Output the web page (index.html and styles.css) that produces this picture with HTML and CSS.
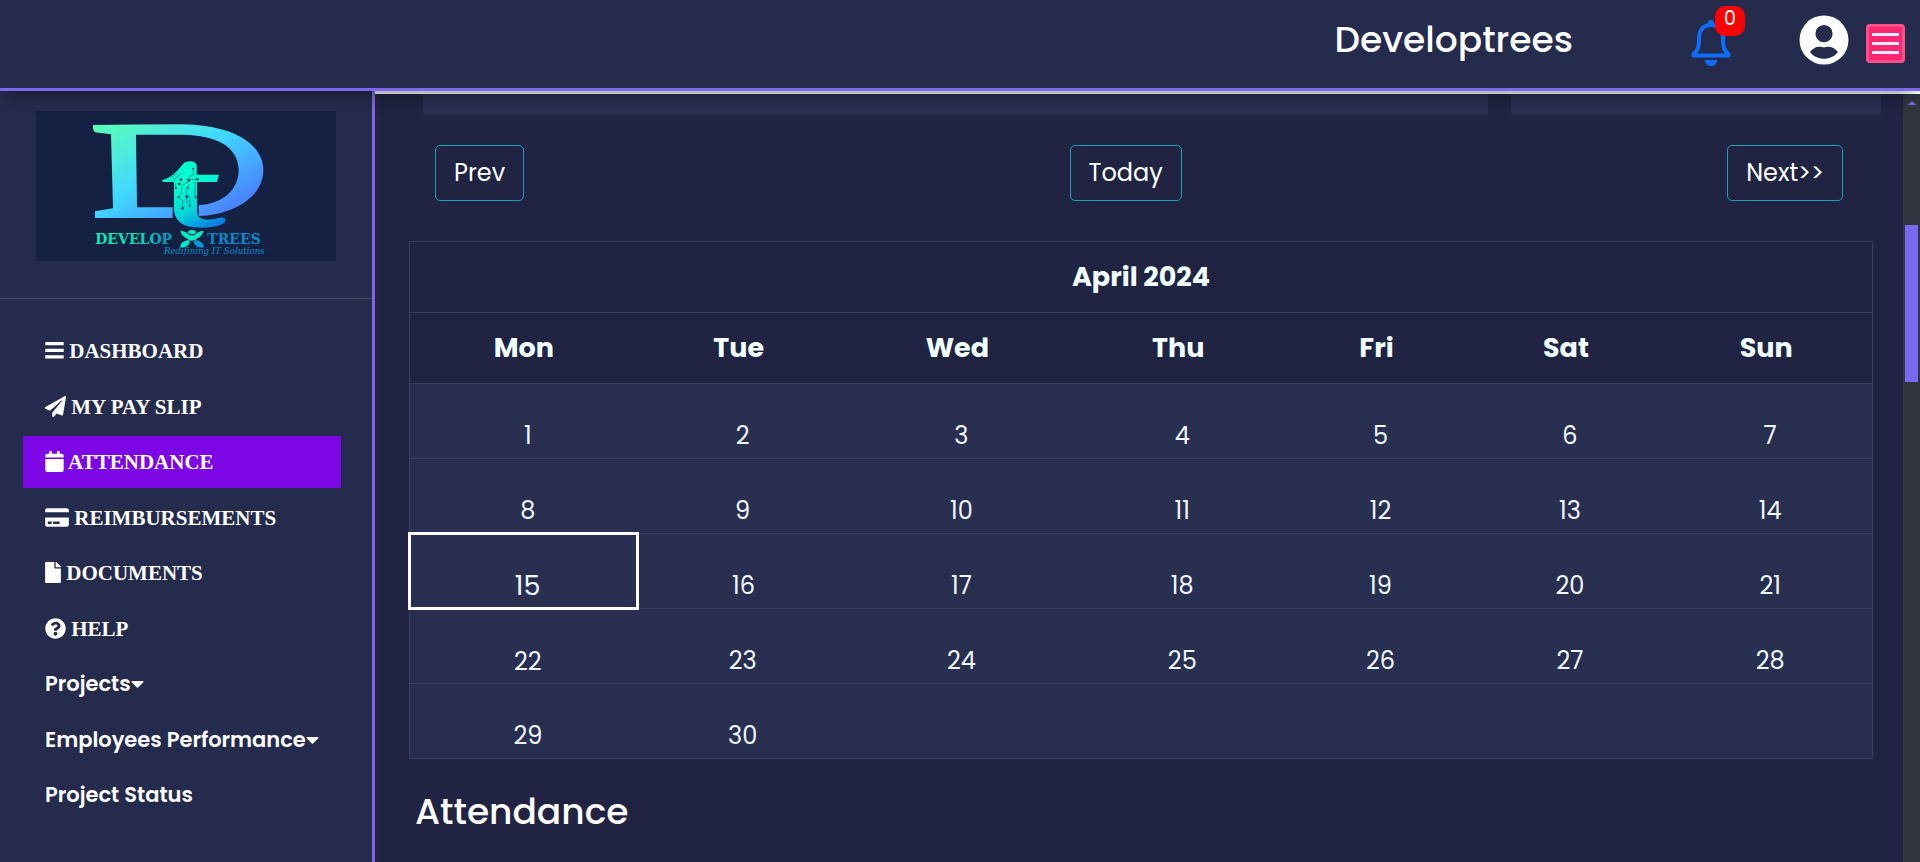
FILE: index.html
```html
<!DOCTYPE html>
<html lang="en">
<head>
<meta charset="utf-8">
<title>Developtrees - Attendance</title>
<link rel="stylesheet" href="styles.css">
</head>
<body>
<div class="app">
  <header class="topbar">
    <h1 class="brand">Developtrees</h1>
    <a class="bell" href="#" aria-label="Notifications">
      <svg width="40" height="48" viewBox="0 0 40 48" aria-hidden="true">
        <path d="M20 7C11 7 8 13.500 8 21C8 30 6.500 33 2.500 36V37.500H37.500V36C33.500 33 32 30 32 21C32 13.500 29 7 20 7Z" fill="none" stroke="#0d6efd" stroke-width="4" stroke-linejoin="round"/>
        <path d="M17 7V5a3 3 0 0 1 6 0v2z" fill="#0d6efd"/>
        <path d="M14 42h12c0 4-3 6-6 6s-6-2-6-6z" fill="#0d6efd"/>
      </svg>
      <span class="badge">0</span>
    </a>
    <a class="account" href="#" aria-label="Account">
      <svg width="50" height="50" viewBox="0 0 50 50" aria-hidden="true">
        <path fill="#fff" fill-rule="evenodd" d="M25 .5a24.500 24.500 0 1 0 0 49a24.500 24.500 0 1 0 0-49zM25 10a8.600 8.600 0 1 1 0 17.200a8.600 8.600 0 1 1 0-17.200zM11 37C14.500 32 19.500 31.200 22 31.800Q25 32.800 28 31.800C31 31.200 36 32.500 39 37C35.500 41.500 30.500 43.800 25 43.800S14.500 41.500 11 37z"/>
      </svg>
    </a>
    <button class="menu-toggle" type="button" aria-label="Menu"><span></span><span></span><span></span></button>
  </header>
  <div class="body">
    <aside class="sidebar">
      <div class="logo">
        <svg viewBox="108 93 900 450" role="img" aria-label="Develop Trees logo">
          <defs>
            <linearGradient id="gd" gradientUnits="userSpaceOnUse" x1="340" y1="110" x2="560" y2="480">
              <stop offset="0" stop-color="#5affb8"/><stop offset=".5" stop-color="#41d8ff"/><stop offset="1" stop-color="#4a7dff"/>
            </linearGradient>
            <linearGradient id="gt" gradientUnits="userSpaceOnUse" x1="560" y1="310" x2="630" y2="450">
              <stop offset="0" stop-color="#00ffd0"/><stop offset=".5" stop-color="#00d5d8"/><stop offset="1" stop-color="#0878e8"/>
            </linearGradient>
            <linearGradient id="gw" gradientUnits="userSpaceOnUse" x1="262" y1="0" x2="793" y2="0">
              <stop offset="0" stop-color="#00f5b8"/><stop offset=".3" stop-color="#00dcb8"/><stop offset=".5" stop-color="#0a86c0"/><stop offset="1" stop-color="#0a8ad0"/>
            </linearGradient>
          </defs>
          <rect x="108" y="93" width="900" height="450" fill="#152142"/>
          <path fill="url(#gd)" d="M279 135Q400 133 545 133C700 135 791 192 790 272C789 350 700 405 596 408V376C680 370 717 320 716 268C714 200 650 166 548 164H408L411 382H518V414H285V394L339 385L333 163L285 157Q279 152 279 145Z"/>
          <path fill="url(#gt)" d="M485 301C525 288 536 266 550 251C562 240 590 241 590 258V284H657L651 306H591V398C597 424 630 421 660 413C680 411 682 424 668 432C640 445 590 446 560 438C530 428 522 405 522 385V306H490Z"/>
          <g fill="none" stroke="#0a6f78" stroke-width="2">
            <path d="M580 266V284L566 292V304L545 318V342L535 352M590 298H556M585 352V305M527 324V310M560 349V368M569 376V352L558 340V325L570 312M548 384V362L537 352M510 295L530 280M520 300L545 280"/>
          </g>
          <g fill="#12405c"><circle cx="580" cy="266" r="3"/><circle cx="592" cy="298" r="4"/><circle cx="566" cy="302" r="4"/><circle cx="543" cy="299" r="4"/><circle cx="564" cy="325" r="3"/><circle cx="528" cy="325" r="3"/><circle cx="535" cy="352" r="3"/><circle cx="560" cy="350" r="4"/><circle cx="587" cy="352" r="3"/><circle cx="548" cy="385" r="4"/><circle cx="569" cy="377" r="3"/><circle cx="538" cy="312" r="4"/></g>
          <g fill="#00e8c4">
            <ellipse cx="576" cy="456" rx="12" ry="6"/>
            <path d="M541 452Q560 454 570 466H582Q592 454 611 452Q608 468 592 475L586 480Q575 484 566 480L560 475Q544 468 541 452Z"/>
            <path d="M566 480Q542 482 540 502Q562 506 570 486Z"/>
            <path fill="#0a9ad8" d="M586 480Q610 482 612 502Q590 506 580 486Z"/>
          </g>
          <text class="wordmark" x="401" y="493" text-anchor="middle" fill="url(#gw)">DEVELOP</text>
          <text class="wordmark" x="702" y="493" text-anchor="middle" fill="url(#gw)">TREES</text>
          <text class="tagline" x="643" y="523" text-anchor="middle" fill="url(#gw)">Redifining IT Solutions</text>
        </svg>
      </div>
      <nav class="nav" aria-label="Main">
        <ul>
          <li><a class="caps" href="#"><svg class="i14" viewBox="0 0 448 512" aria-hidden="true"><path d="M0 50h448v80H0zM0 212h448v80H0zM0 374h448v80H0z"/></svg> DASHBOARD</a></li>
          <li><a class="caps" href="#"><svg class="i16" viewBox="0 0 512 512" aria-hidden="true"><path d="M476 3.2L12.500 270.600c-18.100 10.400-15.800 35.600 2.200 43.200L121 358.400l287.300-253.200c5.500-4.900 13.300 2.600 8.600 8.300L176 407v80.500c0 23.600 28.500 32.900 42.500 15.800L282 426l124.600 52.200c14.200 6 30.400-2.900 33-18.200l72-432C515 7.800 493.300-6.800 476 3.200z"/></svg> MY PAY SLIP</a></li>
          <li><a class="caps active" href="#" aria-current="page"><svg class="i14" viewBox="0 0 448 512" aria-hidden="true"><path d="M12 192h424c6.600 0 12 5.400 12 12v260c0 26.500-21.500 48-48 48H48c-26.500 0-48-21.500-48-48V204c0-6.600 5.400-12 12-12zm436-44v-36c0-26.500-21.500-48-48-48h-48V12c0-6.600-5.400-12-12-12h-40c-6.600 0-12 5.400-12 12v52H160V12c0-6.600-5.400-12-12-12h-40c-6.600 0-12 5.400-12 12v52H48C21.500 64 0 85.500 0 112v36c0 6.600 5.400 12 12 12h424c6.600 0 12-5.400 12-12z"/></svg> ATTENDANCE</a></li>
          <li><a class="caps" href="#"><svg class="i18" viewBox="0 0 576 512" aria-hidden="true"><path d="M0 432c0 26.500 21.500 48 48 48h480c26.500 0 48-21.500 48-48V256H0v176zm192-68c0-6.600 5.400-12 12-12h136c6.600 0 12 5.400 12 12v40c0 6.600-5.400 12-12 12H204c-6.600 0-12-5.400-12-12v-40zm-128 0c0-6.600 5.400-12 12-12h72c6.600 0 12 5.400 12 12v40c0 6.600-5.400 12-12 12H76c-6.600 0-12-5.400-12-12v-40zM576 80v48H0V80c0-26.500 21.500-48 48-48h480c26.500 0 48 21.500 48 48z"/></svg> REIMBURSEMENTS</a></li>
          <li><a class="caps" href="#"><svg class="i12" viewBox="0 0 384 512" aria-hidden="true"><path d="M224 136V0H24C10.700 0 0 10.700 0 24v464c0 13.300 10.700 24 24 24h336c13.300 0 24-10.700 24-24V160H248c-13.200 0-24-10.800-24-24zm160-14.100v6.100H256V0h6.100c6.400 0 12.500 2.500 17 7l97.900 98c4.500 4.500 7 10.600 7 16.900z"/></svg> DOCUMENTS</a></li>
          <li><a class="caps" href="#"><svg class="i16" viewBox="0 0 512 512" aria-hidden="true"><path d="M504 256c0 136.997-111.043 248-248 248S8 392.997 8 256C8 119.083 119.043 8 256 8s248 111.083 248 248zM262.655 90c-54.497 0-89.255 22.957-116.549 63.758-3.536 5.286-2.353 12.415 2.715 16.258l34.699 26.310c5.205 3.947 12.621 3.008 16.665-2.122 17.864-22.658 30.113-35.797 57.303-35.797 20.429 0 45.698 13.148 45.698 32.958 0 14.976-12.363 22.667-32.534 33.976C247.128 238.528 216 254.941 216 296v4c0 6.627 5.373 12 12 12h56c6.627 0 12-5.373 12-12v-1.333c0-28.462 83.186-29.647 83.186-106.667 0-58.002-60.165-102-116.531-102zM256 338c-25.365 0-46 20.635-46 46 0 25.364 20.635 46 46 46s46-20.636 46-46c0-25.364-20.635-46-46-46z"/></svg> HELP</a></li>
          <li><a href="#">Projects<svg class="i10" viewBox="0 0 320 512" aria-hidden="true"><path d="M31.300 192h257.300c17.800 0 26.700 21.500 14.100 34.100L174.100 354.800c-7.800 7.800-20.500 7.800-28.300 0L17.200 226.100C4.600 213.500 13.500 192 31.300 192z"/></svg></a></li>
          <li><a href="#">Employees Performance<svg class="i10" viewBox="0 0 320 512" aria-hidden="true"><path d="M31.300 192h257.300c17.800 0 26.700 21.500 14.100 34.100L174.100 354.800c-7.800 7.800-20.500 7.800-28.300 0L17.200 226.100C4.600 213.500 13.500 192 31.300 192z"/></svg></a></li>
          <li><a href="#">Project Status</a></li>
        </ul>
      </nav>
    </aside>
    <main class="content">
      <div class="page">
        <div class="cards"><div class="card card-wide"></div><div class="card card-side"></div></div>
        <div class="pager">
          <button type="button">Prev</button>
          <button type="button">Today</button>
          <button type="button">Next&gt;&gt;</button>
        </div>
        <table class="calendar">
          <colgroup><col class="c-mon"><col class="c-tue"><col class="c-wed"><col class="c-thu"><col class="c-fri"><col class="c-sat"><col class="c-sun"></colgroup>
          <thead>
            <tr><th colspan="7">April 2024</th></tr>
            <tr><th scope="col">Mon</th><th scope="col">Tue</th><th scope="col">Wed</th><th scope="col">Thu</th><th scope="col">Fri</th><th scope="col">Sat</th><th scope="col">Sun</th></tr>
          </thead>
          <tbody>
            <tr><td>1</td><td>2</td><td>3</td><td>4</td><td>5</td><td>6</td><td>7</td></tr>
            <tr><td>8</td><td>9</td><td>10</td><td>11</td><td>12</td><td>13</td><td>14</td></tr>
            <tr><td class="today">15</td><td>16</td><td>17</td><td>18</td><td>19</td><td>20</td><td>21</td></tr>
            <tr><td>22</td><td>23</td><td>24</td><td>25</td><td>26</td><td>27</td><td>28</td></tr>
            <tr><td>29</td><td>30</td><td></td><td></td><td></td><td></td><td></td></tr>
          </tbody>
        </table>
        <h2 class="section-title">Attendance</h2>
      </div>
      <div class="scrollbar" aria-hidden="true"><div class="arrow"></div><div class="thumb"></div></div>
    </main>
  </div>
</div>
</body>
</html>
```
FILE: styles.css
```css
* { box-sizing: border-box; }

body {
  margin: 0;
  background: #202442;
  color: #fff;
  font-family: Poppins, Inter, "Open Sans", sans-serif;
}

a { color: inherit; text-decoration: none; }

.app {
  display: flex;
  flex-direction: column;
  height: 100vh;
  overflow: hidden;
}

/* Top bar */
.topbar {
  position: relative;
  z-index: 2;
  display: flex;
  flex: none;
  align-items: center;
  justify-content: flex-end;
  padding: 8px 15px 10px 24px;
  height: 91px;
  background: #252b4c;
  border-bottom: 3px solid #7b68ee;
  box-shadow: 0 12px 16px -8px rgba(0, 0, 0, .4);
}

.brand {
  margin: 0 118px 6px 0;
  font-size: 36px;
  font-weight: 500;
  line-height: 48px;
}

.bell {
  position: relative;
  margin: 0 68px 2px 0;
}

.bell svg, .account svg { display: block; }

.badge {
  position: absolute;
  top: -12px;
  right: -14px;
  width: 30px;
  height: 30px;
  border-radius: 10px;
  background: #f00;
  font-size: 19px;
  line-height: 26px;
  text-align: center;
}

.account { margin: 0 17px 6px 0; }

.menu-toggle {
  display: flex;
  flex-direction: column;
  align-items: center;
  justify-content: center;
  gap: 6px;
  width: 39px;
  height: 39px;
  padding: 0;
  border: 3px solid #ff508c;
  border-radius: 4px;
  background: #ff2870;
}

.menu-toggle span {
  width: 27px;
  height: 3px;
  background: #dcecff;
}

/* Sidebar */
.body {
  display: flex;
  flex: 1;
  min-height: 0;
}

.sidebar {
  display: flex;
  flex: none;
  flex-direction: column;
  width: 375px;
  background: #252b4c;
  border-right: 3px solid #7b68ee;
}

.logo {
  padding: 20px 36px 37px;
  border-bottom: 1px solid #464c5a;
}

.logo svg { display: block; width: 100%; }

.wordmark {
  font-family: "DejaVu Serif", serif;
  font-size: 42px;
  font-weight: 700;
}

.tagline {
  font-family: "DejaVu Serif", serif;
  font-size: 26px;
  font-style: italic;
}

.nav {
  display: flex;
  flex: 1;
  padding: 26px 31px 41px 23px;
}

.nav ul {
  display: flex;
  flex: 1;
  flex-direction: column;
  justify-content: space-between;
  margin: 0;
  padding: 0;
  list-style: none;
}

.nav a {
  display: block;
  padding: 0 22px;
  font-size: 21px;
  font-weight: 600;
  line-height: 52px;
  white-space: nowrap;
}

.nav .caps {
  font-family: "Liberation Serif", serif;
  font-weight: 700;
}

.nav .active { background: #7c06e4; }

.nav svg {
  height: 21px;
  fill: currentColor;
  vertical-align: -3px;
}

.i10 { width: 13px; }
.i12 { width: 16px; }
.i14 { width: 19px; }
.i16 { width: 21px; }
.i18 { width: 24px; }

/* Content */
.content {
  display: flex;
  flex: 1;
  min-width: 0;
  border-top: 3px solid #fff;
}

.page {
  flex: 1;
  min-width: 0;
  padding: 0 30px;
  border-left: 3px solid #25292f;
}

.cards {
  display: flex;
  gap: 23px;
  margin: 0 -8px 0 15px;
}

.card {
  height: 21px;
  background: #292f50;
}

.card-wide { flex: 1065; }
.card-side { flex: 370; }

.pager {
  display: flex;
  justify-content: space-between;
  padding: 30px 30px 40px 27px;
}

.pager button {
  padding: 0 18px;
  border: 1px solid #17a2b8;
  border-radius: 5px;
  background: transparent;
  color: #fff;
  font: inherit;
  font-size: 24px;
  line-height: 54px;
}

.calendar {
  width: 100%;
  table-layout: fixed;
  border-collapse: collapse;
  border: 1px solid #3b3f5e;
  text-align: center;
}

.c-mon { width: 15.6%; }
.c-tue { width: 13.8%; }
.c-wed { width: 16.1%; }
.c-thu { width: 14.1%; }
.c-fri { width: 13%; }
.c-sat { width: 12.9%; }
.c-sun { width: 14.5%; }

.calendar tr { border-bottom: 1px solid #3b3f5e; }

.calendar th {
  padding: 0;
  height: 71px;
  color: #f0ffff;
  font-size: 27px;
  font-weight: 700;
}

.calendar td {
  height: 75px;
  padding: 30px 0 0 8px;
  background: #292f50;
  color: #f0f8ff;
  font-size: 24px;
  line-height: 36px;
}

.calendar .today {
  border: 3px solid #fff;
  font-size: 27px;
}

.section-title {
  margin: 29px 7px;
  font-size: 36px;
  font-weight: 500;
  line-height: 48px;
}

.scrollbar {
  flex: none;
  width: 17px;
  padding: 7px 2px;
  background: #2f343f;
}

.arrow {
  width: 8px;
  margin: 0 auto 120px;
  border: 4px solid transparent;
  border-top: 0;
  border-bottom-color: #7b68ee;
}

.thumb {
  height: 157px;
  background: #7b68ee;
}
```
